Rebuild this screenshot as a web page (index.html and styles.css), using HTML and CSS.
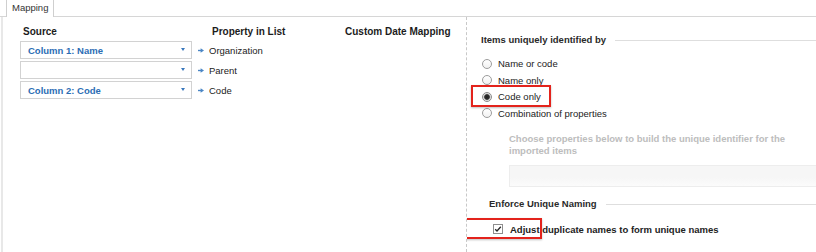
FILE: index.html
```html
<!DOCTYPE html>
<html lang="en">
<head>
    <meta charset="UTF-8">
    <title>Mapping</title>
    <link rel="stylesheet" href="styles.css">
</head>
<body>
    <div class="tabs">
        <div class="tab">Mapping</div>
    </div>
    <div class="panel">
        <div class="mapping">
            <div class="map-head">
                <span class="col-source">Source</span>
                <span class="col-prop">Property in List</span>
                <span class="col-date">Custom Date Mapping</span>
            </div>
            <div class="map-row">
                <div class="select"><span>Column 1: Name</span><i class="caret"></i></div>
                <span class="prop">
                    <svg class="arrow" width="6" height="5" viewBox="0 0 6 5"><path d="M0 2.5h3" stroke="#4a86c5" stroke-width="1.4"/><path d="M2.6 0.3L6 2.5L2.6 4.7z" fill="#4a86c5"/></svg>
                    Organization
                </span>
            </div>
            <div class="map-row">
                <div class="select"><span></span><i class="caret"></i></div>
                <span class="prop">
                    <svg class="arrow" width="6" height="5" viewBox="0 0 6 5"><path d="M0 2.5h3" stroke="#4a86c5" stroke-width="1.4"/><path d="M2.6 0.3L6 2.5L2.6 4.7z" fill="#4a86c5"/></svg>
                    Parent
                </span>
            </div>
            <div class="map-row">
                <div class="select"><span>Column 2: Code</span><i class="caret"></i></div>
                <span class="prop">
                    <svg class="arrow" width="6" height="5" viewBox="0 0 6 5"><path d="M0 2.5h3" stroke="#4a86c5" stroke-width="1.4"/><path d="M2.6 0.3L6 2.5L2.6 4.7z" fill="#4a86c5"/></svg>
                    Code
                </span>
            </div>
        </div>

        <div class="options">
            <div class="group-title">Items uniquely identified by</div>
            <ul class="radios">
                <li><span class="radio"></span>Name or code</li>
                <li><span class="radio"></span>Name only</li>
                <li class="marked"><span class="radio checked"></span>Code only</li>
                <li><span class="radio"></span>Combination of properties</li>
            </ul>
            <p class="hint">Choose properties below to build the unique identifier for the imported items</p>
            <div class="prop-box"></div>

            <div class="group-title enforce">Enforce Unique Naming</div>
            <div class="check-row marked">
                <span class="checkbox">
                    <svg width="8" height="8" viewBox="0 0 8 8"><path d="M1.2 4.2L3 6L6.8 1.8" fill="none" stroke="#262626" stroke-width="1.3"/></svg>
                </span>
                Adjust duplicate names to form unique names
            </div>
        </div>
    </div>
</body>
</html>
```

FILE: styles.css
```css
body {
    margin: 0;
    font-family: "Liberation Sans", Arial, Helvetica, sans-serif;
    font-size: 9.5px;
    color: #222;
    background: #fff;
}

/* tab strip */
.tabs {
    height: 16px;
    border-bottom: 1px solid #d6d6d6;
    display: flex;
    align-items: flex-end;
}

.tab {
    margin-left: 6px;
    width: 48px;
    height: 17px;
    margin-bottom: -1px;
    box-sizing: border-box;
    border: 1px solid #cfcfcf;
    border-top: none;
    border-bottom: none;
    background: #fff;
    padding-left: 5px;
    line-height: 16px;
    color: #333;
}

.panel {
    display: flex;
    margin-left: 1px;
    border-left: 2px solid #e8e8e8;
    height: 235px;
}

/* left side: column mapping */
.mapping {
    width: 464px;
    border-right: 1px dashed #c8c8c8;
    padding: 8px 0 0 17px;
    box-sizing: border-box;
    flex-shrink: 0;
}

.map-head {
    display: flex;
    font-size: 10px;
    font-weight: bold;
    color: #1c1c1c;
    line-height: 14px;
    margin-bottom: 2px;
}

.col-source {
    width: 172px;
    padding-left: 3px;
    box-sizing: border-box;
}

.col-prop {
    margin-left: 20px;
    width: 133px;
}

.map-row {
    display: flex;
    align-items: center;
    margin-bottom: 2px;
}

.select {
    width: 172px;
    height: 18px;
    box-sizing: border-box;
    border: 1px solid #d2d2d2;
    display: flex;
    align-items: center;
    justify-content: space-between;
    padding: 0 6px 0 7px;
    font-weight: bold;
    color: #2b6db4;
}

.caret {
    width: 0;
    height: 0;
    border-left: 2.5px solid transparent;
    border-right: 2.5px solid transparent;
    border-top: 3px solid #3a78bd;
    margin-top: -2px;
}

.prop {
    display: flex;
    align-items: center;
    margin-left: 6px;
    gap: 5px;
}

.arrow {
    display: block;
}

/* right side: options */
.options {
    flex: 1;
    padding: 17px 0 0 14px;
    overflow: hidden;
}

.group-title {
    display: flex;
    align-items: center;
    font-weight: bold;
    color: #2a2a2a;
    line-height: 12px;
    white-space: nowrap;
}

.group-title::after {
    content: '';
    flex: 1;
    border-top: 1px solid #dedede;
    margin-left: 9px;
}

.radios {
    list-style: none;
    margin: 9.5px 0 0;
    padding: 0;
}

.radios li {
    display: flex;
    align-items: center;
    height: 16.5px;
    gap: 6px;
    margin-left: 1px;
}

.radio {
    width: 10px;
    height: 10px;
    box-sizing: border-box;
    border: 1px solid #9c9c9c;
    border-radius: 50%;
    background: linear-gradient(#fff, #f1f1f1);
}

.radio.checked {
    border-color: #8a8a8a;
    background: radial-gradient(circle, #1e1e1e 0, #333 2.4px, #cfcfcf 3.2px, #eee 4px);
}

.marked {
    position: relative;
}

.marked::after {
    content: '';
    position: absolute;
    width: 80px;
    box-sizing: border-box;
    border: 2px solid #e3231c;
    box-shadow: 0 1px 2px rgba(0, 0, 0, 0.25);
}

.radios .marked::after {
    left: -11px;
    top: -4px;
    bottom: -2px;
}

.hint {
    margin: 11px 0 0 28px;
    width: 290px;
    line-height: 12px;
    font-weight: bold;
    color: #bdbdbd;
}

.prop-box {
    margin: 8.5px -20px 0 28px;
    height: 22px;
    box-sizing: border-box;
    border: 1px solid #ededed;
    background: linear-gradient(#f6f6f6, #f6f6f6 55%, #fbfbfb);
}

.group-title.enforce {
    margin: 11px 0 0 8px;
}

.check-row {
    display: flex;
    align-items: center;
    height: 16px;
    margin: 11px 0 0 12px;
    gap: 7px;
    font-weight: bold;
    color: #222;
}

.check-row.marked::after {
    left: -31px;
    top: -3px;
    bottom: -2px;
}

.checkbox {
    width: 10px;
    height: 10px;
    box-sizing: border-box;
    border: 1px solid #8e8e8e;
    background: #fff;
    display: flex;
    align-items: center;
    justify-content: center;
}

.checkbox svg {
    display: block;
}
```
